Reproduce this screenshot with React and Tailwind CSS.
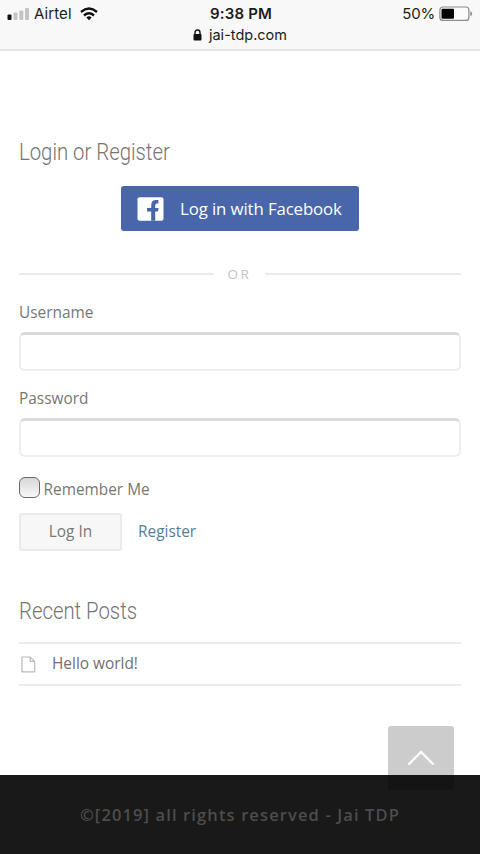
import React from "react";

function StatusBar() {
  return (
    <header className="h-[51px] shrink-0 border-b-2 border-[#e4e4e4] bg-[#f8f8f8] font-['Inter',sans-serif] text-[#1c1c1c]">
      <div className="grid h-[26px] grid-cols-3 items-center pl-[7px] pr-[7px]">
        <div className="flex items-center">
          <svg width="23" height="14" viewBox="0 0 23 14">
            <rect x="0.5" y="7.5" width="4" height="5.5" rx="1" fill="#111" />
            <rect x="6.5" y="5.5" width="4" height="7.5" rx="1" fill="#c4c4c4" />
            <rect x="12.3" y="3.5" width="4" height="9.5" rx="1" fill="#c4c4c4" />
            <rect x="18" y="1" width="4" height="12" rx="1" fill="#c4c4c4" />
          </svg>
          <span className="ml-[4px] pt-px text-[15px] leading-[26px] tracking-[0.1px]">Airtel</span>
          <svg className="ml-[8px]" width="18" height="14" viewBox="0 0 18 14" fill="none" stroke="#111" strokeWidth="2.4">
            <path d="M1 5Q9-1.8 17 5" />
            <path d="M4 8.5Q9 4.2 14 8.5" />
            <path d="M6.3 10.4Q9 8.2 11.7 10.4L9 13.2Z" fill="#111" stroke="none" />
          </svg>
        </div>
        <div className="whitespace-nowrap pl-[2px] pt-px text-center text-[15px] font-semibold leading-[26px] tracking-[0.2px]">9:38 PM</div>
        <div className="flex items-center justify-end">
          <span className="pt-px text-[15px] leading-[26px] tracking-[-0.2px]">50%</span>
          <svg className="ml-[4px]" width="34" height="16" viewBox="0 0 34 16">
            <rect x="0.9" y="1" width="29" height="13.4" rx="3" fill="#fbfbfb" stroke="#8c8c8c" strokeWidth="1.2" />
            <rect x="2.5" y="2.8" width="12.5" height="10" rx="1" fill="#000" />
            <path d="M31.3 5.2Q33.2 6 33.2 7.8Q33.2 9.6 31.3 10.3Z" fill="#8c8c8c" />
          </svg>
        </div>
      </div>
      <div className="flex h-[17px] items-center justify-center">
        <svg width="9" height="12" viewBox="0 0 9 12">
          <path d="M2 6V3.6Q2 1 4.5 1T7 3.6V6" fill="none" stroke="#111" strokeWidth="1.4" />
          <rect x="0.5" y="5" width="8" height="6.5" rx="1" fill="#111" />
        </svg>
        <span className="ml-[7px] text-[14.5px] leading-[17px]">jai-tdp.com</span>
      </div>
    </header>
  );
}

function Heading({ children }) {
  return (
    <h2 className="h-[30px] origin-left scale-x-[0.865] whitespace-nowrap font-['Roboto',sans-serif] text-[23.5px] font-light leading-[30px] text-[#757575]">
      {children}
    </h2>
  );
}

function Field({ label, type }) {
  return (
    <label className="mb-[15px] block h-[71px]">
      <span className="block h-[24px] text-[15.4px] leading-[24px]">{label}</span>
      <input
        type={type}
        className="mt-[7px] block h-[39px] w-full rounded-[6px] border-2 border-t-[3px] border-[#ededed] border-t-[#dadada] bg-white outline-none"
      />
    </label>
  );
}

export default function App() {
  return (
    <div className="relative flex h-[854px] w-[480px] flex-col overflow-hidden bg-white font-['Open_Sans',sans-serif] text-[#777]">
      <StatusBar />
      <main className="flex-1 px-[19px] pt-[86px]">
        <Heading>Login or Register</Heading>
        <button className="mx-auto mt-[19px] flex h-[45px] w-[238px] items-center rounded-[3px] bg-[#4966aa] pl-[16px] text-white">
          <svg width="27" height="24" viewBox="0 0 27 24">
            <rect x="0.5" y="0.3" width="26" height="23.4" rx="2" fill="#fff" />
            <path d="M14.2 23.7V14.6H10V11H14.2V8.4Q14.2 3 19.2 3H21.4V6.6H19.8Q18.2 6.6 18.2 8.4V11H21.6L21 14.6H18.2V23.7Z" fill="#4966aa" />
          </svg>
          <span className="ml-[16px] whitespace-nowrap text-[16.8px] tracking-[-0.1px]">Log in with Facebook</span>
        </button>
        <div className="mt-[33px] flex h-[20px] items-center text-[#c4c4c4]">
          <span className="h-[2px] w-[195px] bg-[#ebebeb]" />
          <span className="flex-1 pt-px text-center text-[13.5px] tracking-[2.5px]">OR</span>
          <span className="h-[2px] w-[196px] bg-[#ebebeb]" />
        </div>
        <div className="mt-[17px]">
          <Field label="Username" type="text" />
          <Field label="Password" type="password" />
        </div>
        <div className="mt-[18px] flex h-[24px] items-center text-[15.4px]">
          <span className="mb-[2px] h-[21px] w-[21px] rounded-[6px] border-[1.5px] border-[#686868] bg-linear-to-b from-[#d7d7d7] to-[#f8f8f8]" />
          <span className="ml-[3.5px] pt-[3px]">Remember Me</span>
        </div>
        <div className="mt-[13px] flex h-[38px] items-center text-[15.4px]">
          <button className="h-[38px] w-[103px] rounded-[3px] border-2 border-[#ebebeb] bg-[#f7f7f7]">Log In</button>
          <a className="ml-[16px] text-[#547d9a]">Register</a>
        </div>
        <div className="mt-[45px]">
          <Heading>Recent Posts</Heading>
        </div>
        <div className="mt-[16px] flex h-[44px] items-center border-y-2 border-[#ebebeb]">
          <svg className="ml-[2px]" width="15" height="17" viewBox="0 0 15 17" fill="none" stroke="#bababa" strokeWidth="1.2">
            <path d="M1 1H9.2L13.7 5.4V15.8H1ZM9.2 1V5.4H13.7" />
          </svg>
          <span className="ml-[16px] text-[15.4px] text-[#6f6f6f]">Hello world!</span>
        </div>
      </main>
      <footer className="h-[79px] shrink-0 bg-[#191919] text-center text-[16.5px] font-semibold leading-[80px] tracking-[1.12px] text-[#4d4d4d]">
        ©[2019] all rights reserved - Jai TDP
      </footer>
      <button className="absolute left-[388px] top-[726px] flex h-[64px] w-[66px] items-center justify-center rounded-[3px] bg-black/20">
        <svg width="28" height="16" viewBox="0 0 28 16" fill="none" stroke="#fff" strokeWidth="2.4">
          <path d="M1.5 14.5L14 2L26.5 14.5" />
        </svg>
      </button>
    </div>
  );
}
